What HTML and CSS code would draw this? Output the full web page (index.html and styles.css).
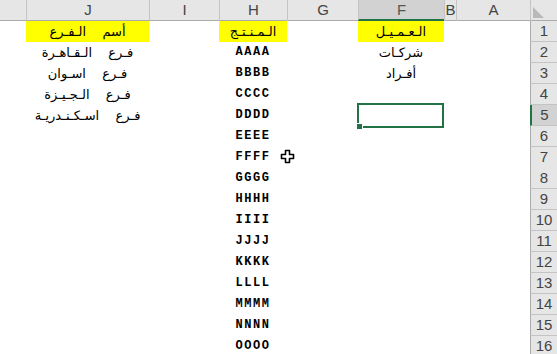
FILE: index.html
```html
<!DOCTYPE html>
<html lang="ar" dir="rtl">
<head>
	<meta charset="UTF-8">
	<title>ورقة العملاء</title>
	<link rel="stylesheet" href="styles.css">
</head>
<body>
	<div class="sheet">
		<!-- رؤوس الأعمدة -->
		<div class="row head">
			<div class="corner"><span class="tri"></span></div>
			<div class="col">A</div>
			<div class="col">B</div>
			<div class="col sel">F</div>
			<div class="col">G</div>
			<div class="col">H</div>
			<div class="col">I</div>
			<div class="col">J</div>
			<div class="col last"></div>
		</div>

		<div class="row">
			<div class="num">1</div><div></div><div></div>
			<div class="cell ar yellow">الـعـمـيـل</div><div></div>
			<div class="cell ar yellow">الـمـنـتـج</div><div></div>
			<div class="cell ar yellow">أسم  الـفـرع</div><div></div>
		</div>
		<div class="row">
			<div class="num">2</div><div></div><div></div>
			<div class="cell ar">شركـات</div><div></div>
			<div class="cell code">AAAA</div><div></div>
			<div class="cell ar">فـرع  الـقـاهـرة</div><div></div>
		</div>
		<div class="row">
			<div class="num">3</div><div></div><div></div>
			<div class="cell ar">أفـراد</div><div></div>
			<div class="cell code">BBBB</div><div></div>
			<div class="cell ar">فـرع  اسـوان</div><div></div>
		</div>
		<div class="row">
			<div class="num">4</div><div></div><div></div>
			<div class="cell"></div><div></div>
			<div class="cell code">CCCC</div><div></div>
			<div class="cell ar">فـرع  الـجـيـزة</div><div></div>
		</div>
		<div class="row">
			<div class="num active">5</div><div></div><div></div>
			<div class="cell picked"><span class="handle"></span></div><div></div>
			<div class="cell code">DDDD</div><div></div>
			<div class="cell ar">فـرع  اسـكـنـدريـة</div><div></div>
		</div>
		<div class="row">
			<div class="num">6</div><div></div><div></div><div></div><div></div>
			<div class="cell code">EEEE</div><div></div><div></div><div></div>
		</div>
		<div class="row">
			<div class="num">7</div><div></div><div></div><div></div>
			<div class="cell pointer">
				<svg width="16" height="16" viewBox="0 0 16 16">
					<path d="M5.5 1.5h4v4h4v4h-4v4h-4v-4h-4v-4h4z" fill="#fff" stroke="#000" stroke-width="1.6" stroke-linejoin="round"/>
				</svg>
			</div>
			<div class="cell code">FFFF</div><div></div><div></div><div></div>
		</div>
		<div class="row">
			<div class="num">8</div><div></div><div></div><div></div><div></div>
			<div class="cell code">GGGG</div><div></div><div></div><div></div>
		</div>
		<div class="row">
			<div class="num">9</div><div></div><div></div><div></div><div></div>
			<div class="cell code">HHHH</div><div></div><div></div><div></div>
		</div>
		<div class="row">
			<div class="num">10</div><div></div><div></div><div></div><div></div>
			<div class="cell code">IIII</div><div></div><div></div><div></div>
		</div>
		<div class="row">
			<div class="num">11</div><div></div><div></div><div></div><div></div>
			<div class="cell code">JJJJ</div><div></div><div></div><div></div>
		</div>
		<div class="row">
			<div class="num">12</div><div></div><div></div><div></div><div></div>
			<div class="cell code">KKKK</div><div></div><div></div><div></div>
		</div>
		<div class="row">
			<div class="num">13</div><div></div><div></div><div></div><div></div>
			<div class="cell code">LLLL</div><div></div><div></div><div></div>
		</div>
		<div class="row">
			<div class="num">14</div><div></div><div></div><div></div><div></div>
			<div class="cell code">MMMM</div><div></div><div></div><div></div>
		</div>
		<div class="row">
			<div class="num">15</div><div></div><div></div><div></div><div></div>
			<div class="cell code">NNNN</div><div></div><div></div><div></div>
		</div>
		<div class="row">
			<div class="num">16</div><div></div><div></div><div></div><div></div>
			<div class="cell code">OOOO</div><div></div><div></div><div></div>
		</div>
	</div>
</body>
</html>
```
FILE: styles.css
```css
html,body{
	margin:0;
	background:#fff;
}
.sheet{
	width:557px;
	height:354px;
	overflow:hidden;
	font-family:"DejaVu Sans",sans-serif;
}
.row{
	display:grid;
	grid-template-columns:27px 74px 12px 86px 71px 68px 70px 123px 26px;
	height:21px;
}
.head{
	height:21px;
	background:#e6e6e6;
	box-sizing:border-box;
	border-bottom:1px solid #ababab;
}
.col{
	font-family:"Liberation Sans",sans-serif;
	font-size:15px;
	color:#444;
	text-align:center;
	line-height:20px;
	border-left:1px solid #c4c4c4;
	box-sizing:border-box;
	direction:ltr;
}
.col.last{
	border-left:none;
}
.col.sel{
	background:#d2d2d2;
	border-bottom:2px solid #217346;
	height:21px;
	line-height:20px;
	color:#555;
}
.corner{
	position:relative;
	border-left:1px solid #c4c4c4;
}
.tri{
	position:absolute;
	left:2px;
	bottom:3px;
	width:0;
	height:0;
	border-bottom:11px solid #b9b9b9;
	border-right:11px solid transparent;
}
.num{
	font-family:"Liberation Sans",sans-serif;
	font-size:15px;
	color:#444;
	background:#e6e6e6;
	text-align:center;
	line-height:20px;
	border-bottom:1px solid #c4c4c4;
	border-left:1px solid #ababab;
	box-sizing:border-box;
}
.num.active{
	background:#d2d2d2;
	border-left:2px solid #217346;
}
.cell{
	text-align:center;
	line-height:21px;
	white-space:pre;
	color:#000;
}
.ar{
	font-size:13px;
	word-spacing:4px;
}
.yellow{
	background:#ffff00;
}
.code{
	font-family:"Liberation Mono",monospace;
	font-weight:bold;
	font-size:12px;
	letter-spacing:1.6px;
	direction:ltr;
}
.picked{
	position:relative;
}
.picked:before{
	content:'';
	position:absolute;
	left:-1px;
	right:0;
	top:-2px;
	bottom:-2px;
	border:2px solid #217346;
}
.handle{
	position:absolute;
	left:-2px;
	bottom:-4px;
	width:5px;
	height:5px;
	background:#217346;
	border:1px solid #fff;
}
/* مؤشر الماوس فوق الخلية */
.pointer{
	position:relative;
}
.pointer svg{
	position:absolute;
	left:-7px;
	top:2px;
}
```
